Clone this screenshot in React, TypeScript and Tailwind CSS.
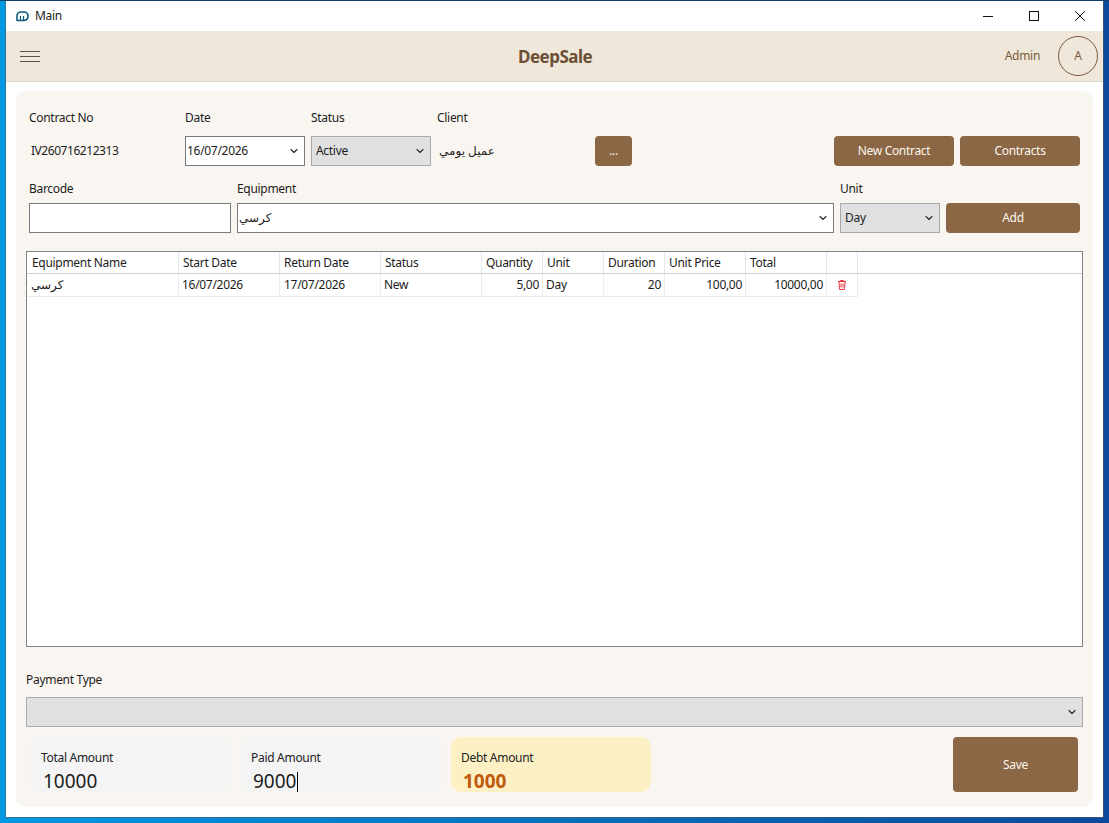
import { ChevronDown } from "lucide-react";

const columns = "grid grid-cols-[152px_101px_101px_101px_61px_61px_61px_81px_81px_31px]";

function Select({ value, className, gray }: { value?: string; className: string; gray?: boolean }) {
  return (
    <div
      className={`flex h-[30px] shrink-0 items-center justify-between border pr-[4px] text-[12px] ${className} ${
        gray ? "border-[#a9a9a9] bg-[#e0e0e0] pl-[4px]" : "border-[#7a7a7a] bg-white pl-[1px]"
      }`}
    >
      <span>{value}</span>
      <ChevronDown className="h-[12px] w-[12px] text-[#2a2a2a]" strokeWidth={2.2} />
    </div>
  );
}

function Amount({ label, value, className, valueClass }: { label: string; value: string; className: string; valueClass: string }) {
  return (
    <div className={`h-[55px] w-[200px] rounded-[10px] pl-[10px] pt-[12px] ${className}`}>
      <div className="text-[12px] leading-[18px] text-[#222]">{label}</div>
      <div className={`mt-[2px] flex h-[25px] items-center pl-[2px] text-[19px] tracking-normal ${valueClass}`}>{value}</div>
    </div>
  );
}

function Brown({ children, className }: { children: string; className: string }) {
  return (
    <button className={`flex shrink-0 items-center justify-center rounded-[4px] bg-[#8b6745] text-[12px] text-[#fbf6ee] ${className}`}>
      {children}
    </button>
  );
}

export default function App() {
  return (
    <div className="h-[823px] w-[1109px] overflow-hidden border-t border-[#123f6b] bg-gradient-to-r from-[#0098e2] to-[#0a4a9c] pl-[6px] font-['Noto_Sans','DejaVu_Sans',sans-serif] tracking-[-0.3px] text-[#1c1c1c]">
      <div className="flex h-[816px] w-[1097px] flex-col bg-white shadow-[0_0_0_1px_rgba(90,90,90,0.55)]">
        {/* title bar */}
        <div className="flex h-[30px] shrink-0 items-center">
          <svg className="ml-[10px] h-[11px] w-[13px]" viewBox="0 0 13 11" fill="none" stroke="#0d5a78">
            <path d="M1 10V5a4 4 0 0 1 4-4h3a4 4 0 0 1 4 4 4.5 4.5 0 0 1-4 4.5H1z" strokeWidth="1.6" />
            <path d="M4.5 9V5M7.5 9V5" strokeWidth="1.2" />
          </svg>
          <span className="ml-[6px] text-[12px]">Main</span>
          <div className="ml-auto flex items-center pr-[17px]">
            <svg className="h-[12px] w-[12px]" viewBox="0 0 12 12">
              <path d="M1 6.5h10" stroke="#111" strokeWidth="1" />
            </svg>
            <svg className="ml-[34px] h-[12px] w-[12px]" viewBox="0 0 12 12">
              <rect x="1.5" y="1.5" width="9" height="9" fill="none" stroke="#111" strokeWidth="1" />
            </svg>
            <svg className="ml-[34px] h-[12px] w-[12px]" viewBox="0 0 12 12">
              <path d="M1 1l10 10M11 1L1 11" stroke="#111" strokeWidth="1" />
            </svg>
          </div>
        </div>

        {/* app header */}
        <div className="relative flex h-[51px] shrink-0 items-center border-b border-[#dcd8cf] bg-[#efe8da] pl-[14px] pr-[5px]">
          <div className="flex w-[20px] flex-col gap-[4px]">
            <div className="h-px bg-[#555]" />
            <div className="h-px bg-[#555]" />
            <div className="h-px bg-[#555]" />
          </div>
          <div className="absolute left-[512px] top-[13px] text-[17px] font-bold tracking-[-0.5px] text-[#6d4f36]">DeepSale</div>
          <span className="ml-auto text-[12px] text-[#7a5a3c]">Admin</span>
          <div className="ml-[18px] flex h-[40px] w-[40px] items-center justify-center rounded-full border border-[#7a5a3c] text-[12px] text-[#7a5a3c]">
            A
          </div>
        </div>

        {/* main panel */}
        <div className="mx-[10px] mt-[9px] flex h-[716px] flex-col rounded-[10px] bg-[#f9f6f1] px-[10px]">
          <div className="ml-[3px] mt-[18px] flex h-[18px] items-center text-[12px]">
            <span className="w-[156px]">Contract No</span>
            <span className="w-[126px]">Date</span>
            <span className="w-[126px]">Status</span>
            <span>Client</span>
          </div>
          <div className="ml-[3px] mt-[9px] flex items-center text-[12px]">
            <span className="w-[156px] pl-[2px] tracking-[-0.45px]">IV260716212313</span>
            <Select value="16/07/2026" className="w-[120px]" />
            <Select value="Active" gray className="ml-[6px] w-[120px]" />
            <span className="ml-[6px] w-[158px] pl-[2px] tracking-normal">عميل يومي</span>
            <Brown className="h-[30px] w-[37px]">...</Brown>
            <Brown className="ml-[202px] h-[30px] w-[120px]">New Contract</Brown>
            <Brown className="ml-[6px] h-[30px] w-[120px]">Contracts</Brown>
          </div>

          <div className="ml-[3px] mt-[14px] flex h-[18px] items-center text-[12px]">
            <span className="w-[208px]">Barcode</span>
            <span className="w-[603px]">Equipment</span>
            <span>Unit</span>
          </div>
          <div className="ml-[3px] mt-[5px] flex">
            <div className="h-[30px] w-[202px] border border-[#7a7a7a] bg-white" />
            <Select value="كرسي" className="ml-[6px] w-[597px]" />
            <Select value="Day" gray className="ml-[6px] w-[100px]" />
            <Brown className="ml-[6px] h-[30px] w-[134px]">Add</Brown>
          </div>

          {/* table */}
          <div className="mt-[18px] h-[396px] w-[1057px] border border-[#828282] bg-white text-[12px]">
            <div className="border-b border-[#d0d0d0]">
              <div className={`${columns} h-[21px] leading-[21px]`}>
                {["Equipment Name", "Start Date", "Return Date", "Status", "Quantity", "Unit", "Duration", "Unit Price", "Total", ""].map((h, i) => (
                  <div key={i} className={`border-r border-[#e6e6e6] ${i === 0 ? "pl-[5px]" : "pl-[4px]"}`}>
                    {h}
                  </div>
                ))}
              </div>
            </div>
            <div className={`${columns} h-[23px] w-[831px] border-b border-[#ececec] leading-[22px]`}>
              <div className="border-r border-[#ececec] pl-[4px] tracking-normal">كرسي</div>
              <div className="border-r border-[#ececec] pl-[3px]">16/07/2026</div>
              <div className="border-r border-[#ececec] pl-[4px]">17/07/2026</div>
              <div className="border-r border-[#ececec] pl-[3px]">New</div>
              <div className="border-r border-[#ececec] pr-[3px] text-right">5,00</div>
              <div className="border-r border-[#ececec] pl-[3px]">Day</div>
              <div className="border-r border-[#ececec] pr-[3px] text-right">20</div>
              <div className="border-r border-[#ececec] pr-[3px] text-right">100,00</div>
              <div className="border-r border-[#ececec] pr-[3px] text-right">10000,00</div>
              <div className="flex items-center justify-center border-r border-[#ececec]">
                <svg className="h-[10px] w-[8px]" viewBox="0 0 8 10" fill="none" stroke="#e8343a" strokeWidth="1">
                  <path d="M0 1.5h8M2.5 1.5V.5h3v1M1 1.5l.5 8h5l.5-8M3 3.5v4M5 3.5v4" />
                </svg>
              </div>
            </div>
          </div>

          <div className="mt-[24px] h-[18px] text-[12px] leading-[18px]">Payment Type</div>
          <Select gray className="mt-[8px] w-[1057px]" />

          <div className="mt-[10px] flex pl-[5px]">
            <Amount label="Total Amount" value="10000" className="bg-[#f4f4f4]" valueClass="text-[#1c1c1c]" />
            <Amount
              label="Paid Amount"
              value="9000"
              className="ml-[10px] bg-[#f4f4f4]"
              valueClass="text-[#1c1c1c] after:ml-px after:h-[20px] after:w-px after:bg-black"
            />
            <Amount label="Debt Amount" value="1000" className="ml-[10px] bg-[#fdf0c4]" valueClass="font-bold text-[#bf5a0e]" />
            <Brown className="ml-[302px] h-[55px] w-[125px]">Save</Brown>
          </div>
        </div>
      </div>
    </div>
  );
}
